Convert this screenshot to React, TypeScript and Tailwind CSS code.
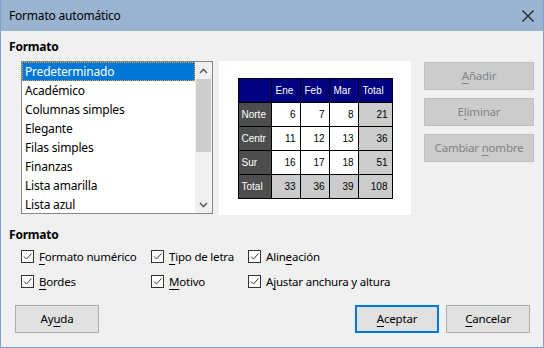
import type { ReactNode } from 'react'

const FONT = { fontFamily: '"Noto Sans", "Open Sans", sans-serif' }
const CELL_FONT = { fontFamily: '"Liberation Sans", Arial, sans-serif' }

const ITEMS = [
  'Predeterminado',
  'Académico',
  'Columnas simples',
  'Elegante',
  'Filas simples',
  'Finanzas',
  'Lista amarilla',
  'Lista azul',
]

/** Underlines the mnemonic letter at index `at`. */
function Mn({ text, at }: { text: string; at: number }) {
  return (
    <span className="whitespace-pre">
      {text.slice(0, at)}
      <span className="underline underline-offset-[3px] decoration-1">{text[at]}</span>
      {text.slice(at + 1)}
    </span>
  )
}

function Check({ children }: { children: ReactNode }) {
  return (
    <label className="flex items-center gap-[5px] h-[25px] whitespace-nowrap">
      <svg width="13" height="13" viewBox="0 0 13 13" className="shrink-0">
        <rect x="0.5" y="0.5" width="12" height="12" fill="#ffffff" stroke="#333333" />
        <path d="M3 6.5 L5.5 9 L10.5 3.5" fill="none" stroke="#333333" strokeWidth="1" />
      </svg>
      {children}
    </label>
  )
}

function SideButton({ children }: { children: ReactNode }) {
  return (
    <div className="w-[110px] h-[28px] flex items-center justify-center bg-[#cccccc] border border-[#bfbfbf] text-[#838383]">
      {children}
    </div>
  )
}

function Chevron({ up }: { up?: boolean }) {
  return (
    <svg width="9" height="6" viewBox="0 0 9 6">
      <path
        d={up ? 'M1 5 L4.5 1.5 L8 5' : 'M1 1 L4.5 4.5 L8 1'}
        fill="none"
        stroke="#606060"
        strokeWidth="1.6"
      />
    </svg>
  )
}

type Cell = { v: string; kind: 'head' | 'side' | 'body' | 'sum' | 'corner' }

const ROWS: Cell[][] = [
  [
    { v: '', kind: 'corner' },
    { v: 'Ene', kind: 'head' },
    { v: 'Feb', kind: 'head' },
    { v: 'Mar', kind: 'head' },
    { v: 'Total', kind: 'head' },
  ],
  [
    { v: 'Norte', kind: 'side' },
    { v: '6', kind: 'body' },
    { v: '7', kind: 'body' },
    { v: '8', kind: 'body' },
    { v: '21', kind: 'sum' },
  ],
  [
    { v: 'Centr', kind: 'side' },
    { v: '11', kind: 'body' },
    { v: '12', kind: 'body' },
    { v: '13', kind: 'body' },
    { v: '36', kind: 'sum' },
  ],
  [
    { v: 'Sur', kind: 'side' },
    { v: '16', kind: 'body' },
    { v: '17', kind: 'body' },
    { v: '18', kind: 'body' },
    { v: '51', kind: 'sum' },
  ],
  [
    { v: 'Total', kind: 'side' },
    { v: '33', kind: 'sum' },
    { v: '36', kind: 'sum' },
    { v: '39', kind: 'sum' },
    { v: '108', kind: 'sum' },
  ],
]

const cellCls: Record<Cell['kind'], string> = {
  corner: 'bg-[#000080]',
  head: 'bg-[#000080] text-white justify-start pl-[4px]',
  side: 'bg-[#4d4d4d] text-white justify-start pl-[3px]',
  body: 'bg-white text-black justify-end pr-[4px]',
  sum: 'bg-[#cccccc] text-black justify-end pr-[4px]',
}

export default function App() {
  return (
    <div
      className="w-[544px] h-[348px] flex flex-col bg-[#f0f0f0] border-x border-b border-[#7ea1cf] text-[11.5px] tracking-[-0.2px] text-black"
      style={FONT}
    >
      {/* Title bar */}
      <div className="h-[31px] shrink-0 flex items-center justify-between bg-[#99b4d1] pl-[8px] pr-[9px]">
        <span className="text-[12px]">Formato automático</span>
        <svg width="12" height="12" viewBox="0 0 12 12">
          <path d="M0.5 0.5 L11.5 11.5 M11.5 0.5 L0.5 11.5" stroke="#1a1a1a" strokeWidth="1.1" />
        </svg>
      </div>

      <div className="flex-1 flex flex-col pt-[8px]">
        <div className="pl-[8px] font-bold leading-[16px] text-[12px]">Formato</div>

        <div className="flex items-start mt-[6px] pl-[20px]">
          {/* List box */}
          <div className="w-[192px] h-[153px] border border-[#828790] bg-white flex overflow-hidden">
            <div className="flex-1 flex flex-col">
              {ITEMS.map((it, i) => (
                <div
                  key={it}
                  className={`h-[19px] shrink-0 flex items-center leading-none text-[12px] ${
                    i === 0 ? 'bg-[#0078d7] text-white border border-dotted border-[#ff9a2e] pl-[2px]' : 'pl-[3px]'
                  }`}
                >
                  {it}
                </div>
              ))}
            </div>
            <div className="w-[17px] shrink-0 flex flex-col bg-[#f0f0f0]">
              <div className="h-[17px] flex items-center justify-center">
                <Chevron up />
              </div>
              <div className="h-[73px] mx-[1px] bg-[#cdcdcd]" />
              <div className="flex-1" />
              <div className="h-[17px] flex items-center justify-center">
                <Chevron />
              </div>
            </div>
          </div>

          {/* Preview */}
          <div className="ml-[6px] w-[192px] h-[154px] bg-white flex items-center justify-center">
            <div
              className="grid grid-cols-[33px_29px_29px_29px_34px] border-l border-t border-black text-[10px] tracking-normal"
              style={CELL_FONT}
            >
              {ROWS.flat().map((c, i) => (
                <div
                  key={i}
                  className={`h-[24px] flex items-center border-r border-b border-black ${cellCls[c.kind]}`}
                >
                  {c.v}
                </div>
              ))}
            </div>
          </div>

          {/* Side buttons */}
          <div className="ml-[13px] mt-[1px] flex flex-col gap-[8px]">
            <SideButton>
              <Mn text="Añadir" at={0} />
            </SideButton>
            <SideButton>
              <Mn text="Eliminar" at={1} />
            </SideButton>
            <SideButton>
              <Mn text="Cambiar nombre" at={8} />
            </SideButton>
          </div>
        </div>

        <div className="pl-[8px] mt-[12px] font-bold leading-[16px] text-[12px]">Formato</div>

        <div className="grid grid-cols-[130px_97px_auto] pl-[20px] mt-[1px]">
          <Check>
            <Mn text="Formato numérico" at={0} />
          </Check>
          <Check>
            <Mn text="Tipo de letra" at={0} />
          </Check>
          <Check>
            <Mn text="Alineación" at={4} />
          </Check>
          <Check>
            <Mn text="Bordes" at={0} />
          </Check>
          <Check>
            <Mn text="Motivo" at={0} />
          </Check>
          <Check>
            <Mn text="Ajustar anchura y altura" at={1} />
          </Check>
        </div>

        <div className="flex items-center mt-[11px] pl-[14px] pr-[13px]">
          <button className="w-[84px] h-[28px] bg-[#e1e1e1] border border-[#adadad]">
            <Mn text="Ayuda" at={2} />
          </button>
          <div className="flex-1" />
          <button className="w-[84px] h-[28px] bg-[#e1e1e1] border-2 border-[#0078d7]">
            <Mn text="Aceptar" at={0} />
          </button>
          <button className="ml-[7px] w-[84px] h-[28px] bg-[#e1e1e1] border border-[#adadad]">
            <Mn text="Cancelar" at={0} />
          </button>
        </div>
      </div>
    </div>
  )
}
